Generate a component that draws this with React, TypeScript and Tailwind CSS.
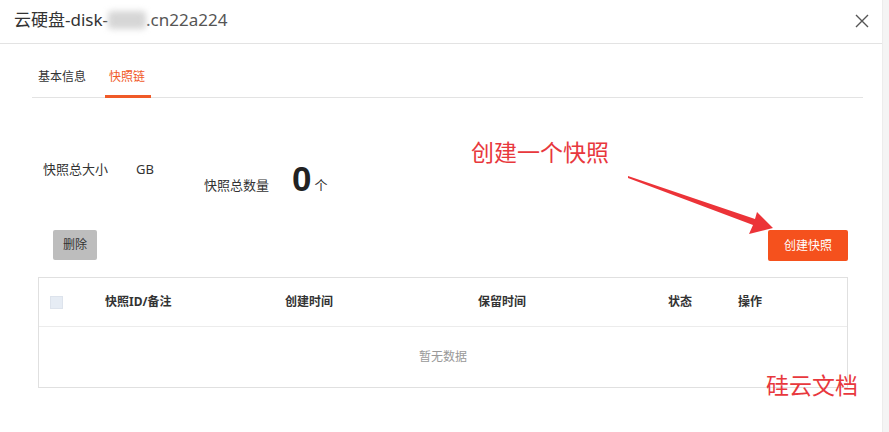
import React from "react";

const font = { fontFamily: '"Noto Sans", "Noto Sans CJK SC", sans-serif' };

export default function App() {
  return (
    <div
      className="relative flex w-[889px] h-[432px] overflow-hidden bg-white text-[#333]"
      style={font}
    >
      <div className="flex flex-col w-[882px]">
        {/* header */}
        <div className="flex items-center justify-between h-[44px] border-b border-[#e3e3e3] pl-[14px] pr-[13px]">
          <div className="flex items-center text-[17px] leading-[24px] text-[#333] -mt-[3px]">
            <span>云硬盘-disk-</span>
            <span className="inline-block w-[38px] h-[18px] bg-[#d6d6d6] blur-[3px] rounded-sm" />
            <span className="text-[#555]">.cn22a224</span>
          </div>
          <svg width="14" height="14" viewBox="0 0 14 14" className="-mt-[2px]">
            <path d="M1 1 L13 13 M13 1 L1 13" stroke="#555" strokeWidth="1.4" />
          </svg>
        </div>

        {/* tabs */}
        <div className="flex items-end h-[54px] ml-[32px] mr-[19px] border-b border-[#e3e3e3] text-[12px] leading-[16px]">
          <div className="pl-[6px] pr-[6px] pb-[12px] text-[#333]">基本信息</div>
          <div className="ml-[13px] px-[4px] w-[46px] pb-[10px] border-b-[3px] border-[#f05a28] -mb-px text-[#f05a28]">
            快照链
          </div>
        </div>

        {/* stats */}
        <div className="flex items-start h-[132px] pl-[43px] text-[13px] leading-[18px]">
          <div className="flex mt-[62px]">
            <span>快照总大小</span>
            <span className="ml-[28px]">GB</span>
          </div>
          <div className="flex items-end ml-[50px] mt-[62px]">
            <span className="mb-[4px]">快照总数量</span>
            <span
              className="ml-[23px] text-[35px] leading-[38px] font-bold text-[#222]"
              style={{ fontFamily: '"Liberation Sans", Arial, sans-serif' }}
            >
              0
            </span>
            <span className="ml-[3px] mb-[4px]">个</span>
          </div>
        </div>

        {/* buttons */}
        <div className="flex items-start justify-between pl-[53px] pr-[34px] h-[47px]">
          <div className="flex items-center justify-center w-[44px] h-[30px] bg-[#bdbdbd] rounded-[2px] text-[12px] text-[#333]">
            删除
          </div>
          <div className="flex items-center justify-center w-[80px] h-[31px] bg-[#f5511d] rounded-[2px] text-[12px] text-white">
            创建快照
          </div>
        </div>

        {/* table */}
        <div className="ml-[38px] w-[810px] border border-[#e0e0e0] text-[12px] leading-[16px]">
          <div className="grid grid-cols-[66px_180px_193px_190px_70px_1fr] items-center h-[49px] border-b border-[#ececec] font-bold text-[#333]">
            <div className="pl-[11px]">
              <div className="w-[13px] h-[13px] bg-[#e6ecf4] border border-[#dde3ec]" />
            </div>
            <div>快照ID/备注</div>
            <div>创建时间</div>
            <div>保留时间</div>
            <div>状态</div>
            <div>操作</div>
          </div>
          <div className="flex items-center justify-center h-[60px] text-[#999]">暂无数据</div>
        </div>
      </div>
      <div className="w-[7px] h-full bg-[#f4f4f4] border-l border-[#ececec]" />

      {/* annotations */}
      <div className="absolute left-[471px] top-[137px] text-[23px] leading-[30px] text-[#e8383d]">
        创建一个快照
      </div>
      <div className="absolute left-[766px] top-[370px] text-[23px] leading-[30px] text-[#e8383d]">
        硅云文档
      </div>
      <svg className="absolute left-0 top-0" width="889" height="432">
        <polygon
          points="628,176 755,219 757,212 773,228 749,234 753,225 628,178"
          fill="#ec3338"
        />
      </svg>
    </div>
  );
}
